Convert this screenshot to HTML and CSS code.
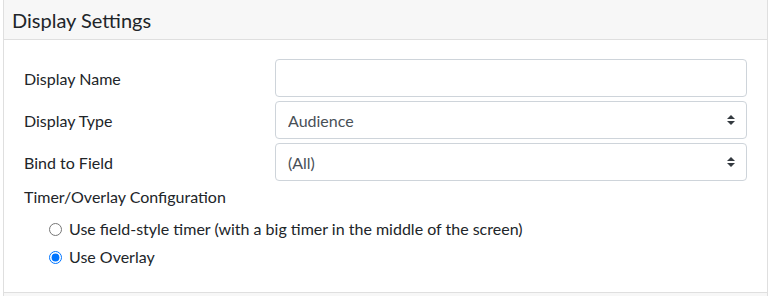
FILE: index.html
```html
<!DOCTYPE html>
<html lang="en">
    <head>
        <meta charset="UTF-8">
        <title>Display Settings</title>
        <meta name="viewport" content="width=device-width, initial-scale=1.0">
        <link rel="stylesheet" href="styles.css">
    </head>
    <body>
        <div class="card">
            <div class="card-header">
                <h5 class="card-title">Display Settings</h5>
            </div>
            <div class="card-body">
                <div class="form-row">
                    <label class="col-label" for="displayName">Display Name</label>
                    <div class="col-field">
                        <input type="text" id="displayName" class="form-control">
                    </div>
                </div>
                <div class="form-row">
                    <label class="col-label" for="displayType">Display Type</label>
                    <div class="col-field select-wrap">
                        <select id="displayType" class="form-control custom-select">
                            <option>Audience</option>
                            <option>Field</option>
                        </select>
                        <svg class="select-arrow" width="8" height="10" viewBox="0 0 4 5"><path d="M2 0L0 2h4zm0 5L0 3h4z" fill="#343a40"/></svg>
                    </div>
                </div>
                <div class="form-row">
                    <label class="col-label" for="bindField">Bind to Field</label>
                    <div class="col-field select-wrap">
                        <select id="bindField" class="form-control custom-select">
                            <option>(All)</option>
                        </select>
                        <svg class="select-arrow" width="8" height="10" viewBox="0 0 4 5"><path d="M2 0L0 2h4zm0 5L0 3h4z" fill="#343a40"/></svg>
                    </div>
                </div>
                <p class="group-label">Timer/Overlay Configuration</p>
                <div class="radio-list">
                    <label class="form-check">
                        <input type="radio" name="timerMode" value="field">
                        <span>Use field-style timer (with a big timer in the middle of the screen)</span>
                    </label>
                    <label class="form-check">
                        <input type="radio" name="timerMode" value="overlay" checked>
                        <span>Use Overlay</span>
                    </label>
                </div>
            </div>
            <div class="card-footer"></div>
        </div>
    </body>
</html>
```

FILE: styles.css
```css
body {
    font-family: Lato, "Open Sans", sans-serif;
    font-size: 16px;
    color: #212529;
    background-color: #fff;
    margin: 0;
    padding: 0 4px 0 3px;
}
.card {
    border: 1px solid #dfdfdf;
    border-top: none;
    background: #fff;
}
.card-header {
    background-color: #f7f7f7;
    border-bottom: 1px solid #dfdfdf;
    padding: 7px 8px 6px;
}
.card-title {
    margin: 0;
    font-size: 20px;
    font-weight: 400;
    line-height: 26px;
}
.card-body {
    padding: 19px 20px 23px;
}
.form-row {
    display: flex;
    align-items: center;
    margin-bottom: 4px;
}
.col-label {
    width: 251px;
    line-height: 24px;
    padding-top: 2px;
}
.col-field {
    flex: 1;
}
.form-control {
    display: block;
    box-sizing: border-box;
    width: 100%;
    height: 38px;
    padding: 6px 12px;
    font-family: inherit;
    font-size: 16px;
    color: #495057;
    background-color: #fff;
    border: 1px solid #ced4da;
    border-radius: 4px;
    outline: none;
}
.select-wrap {
    position: relative;
}
.custom-select {
    appearance: none;
    -webkit-appearance: none;
    padding-right: 30px;
}
.select-arrow {
    position: absolute;
    right: 12px;
    top: 14px;
    pointer-events: none;
}
.group-label {
    margin: 0 0 8px;
    line-height: 24px;
}
.radio-list {
    padding-left: 24px;
}
.form-check {
    display: flex;
    align-items: center;
    line-height: 24px;
    margin-bottom: 4px;
}
.form-check:last-child {
    margin-bottom: 0;
}
.form-check input {
    width: 13px;
    height: 13px;
    margin: 0 7px 0 1px;
}
.card-footer {
    background-color: #f7f7f7;
    border-top: 1px solid #dfdfdf;
    height: 10px;
}
```
